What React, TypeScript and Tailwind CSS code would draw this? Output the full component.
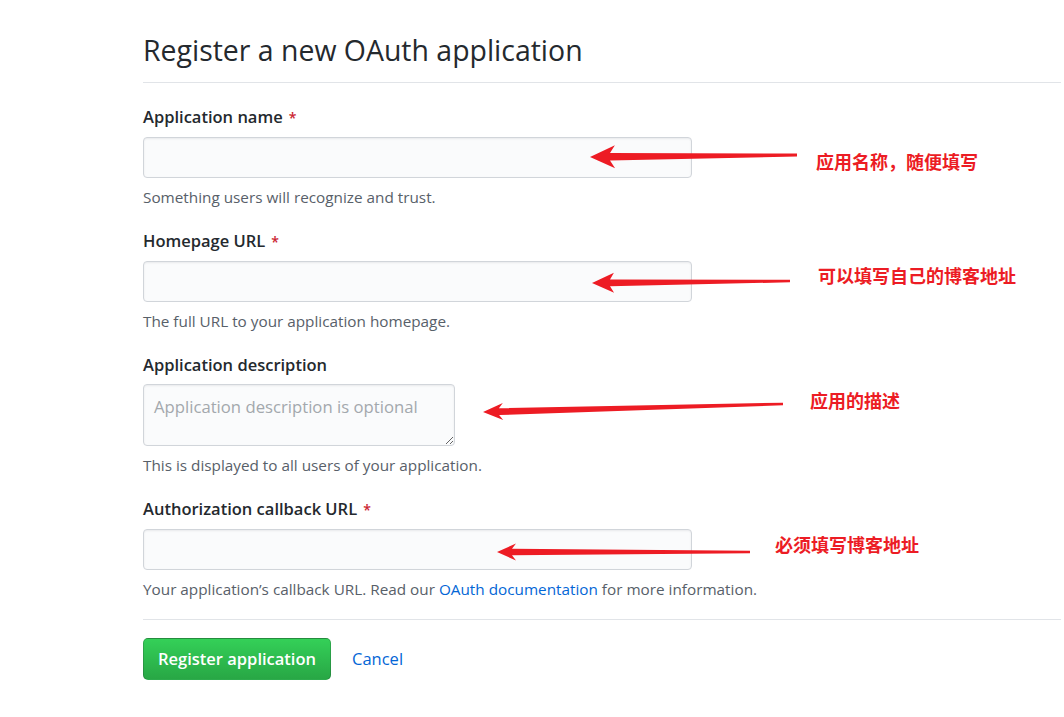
import React from "react";

type Arrow = { tip: [number, number]; tail: [number, number]; hl: number; hh: number; nl: number; sh: number; st: number };

function arrowPoints(a: Arrow): string {
  const [tx, ty] = a.tip;
  const [sx, sy] = a.tail;
  const dx = sx - tx;
  const dy = sy - ty;
  const len = Math.hypot(dx, dy);
  const ux = dx / len;
  const uy = dy / len;
  const nx = -uy;
  const ny = ux;
  const p = (x: number, y: number) => `${x.toFixed(1)},${y.toFixed(1)}`;
  return [
    p(tx, ty),
    p(tx + ux * a.hl + nx * a.hh, ty + uy * a.hl + ny * a.hh),
    p(tx + ux * a.nl + nx * a.sh, ty + uy * a.nl + ny * a.sh),
    p(sx + nx * a.st, sy + ny * a.st),
    p(sx - nx * a.st, sy - ny * a.st),
    p(tx + ux * a.nl - nx * a.sh, ty + uy * a.nl - ny * a.sh),
    p(tx + ux * a.hl - nx * a.hh, ty + uy * a.hl - ny * a.hh),
  ].join(" ");
}

const arrows: Arrow[] = [
  { tip: [590, 157], tail: [797, 155], hl: 25, hh: 11.5, nl: 20, sh: 3.8, st: 1.4 },
  { tip: [592, 283], tail: [790, 281], hl: 22, hh: 10, nl: 18, sh: 3.4, st: 1.3 },
  { tip: [483, 412], tail: [783, 404], hl: 20, hh: 8.5, nl: 16, sh: 3.4, st: 1.3 },
  { tip: [497, 552], tail: [750, 552], hl: 19, hh: 8.5, nl: 15, sh: 3.2, st: 1.3 },
];

const notes = [
  { text: "应用名称，随便填写", cls: "left-[816px] top-[149px]" },
  { text: "可以填写自己的博客地址", cls: "left-[818px] top-[263px]" },
  { text: "应用的描述", cls: "left-[810px] top-[388px]" },
  { text: "必须填写博客地址", cls: "left-[775px] top-[532px]" },
];

const font = { fontFamily: '"Open Sans", "Noto Sans", sans-serif' };

function Label({ children, required }: { children: React.ReactNode; required?: boolean }) {
  return (
    <div className="h-[24px] leading-[24px] text-[16.5px] font-semibold text-[#24292e]">
      {children}
      {required && <span className="ml-[6px] text-[14px] text-[#cb2431]">*</span>}
    </div>
  );
}

function Note({ children }: { children: React.ReactNode }) {
  return <div className="mt-[9px] h-[20px] leading-[20px] text-[15.3px] text-[#586069]">{children}</div>;
}

function Input() {
  return (
    <div className="mt-[8px] h-[41px] w-[549px] rounded-[4px] border border-[#d1d5da] bg-[#fafbfc] shadow-[inset_0_1px_2px_rgba(27,31,35,0.075)]" />
  );
}

export default function App() {
  return (
    <div className="relative h-[717px] w-[1064px] overflow-hidden bg-white" style={font}>
      <div className="ml-[143px] w-[918px]">
        <div className="border-b border-[#e1e4e8] pt-[32px] pb-[14px]">
          <h1 className="h-[36px] text-[28.45px] leading-[36px] font-normal text-[#24292e]">Register a new OAuth application</h1>
        </div>

        <div className="pt-[22px]">
          <Label required>Application name</Label>
          <Input />
          <Note>Something users will recognize and trust.</Note>
        </div>

        <div className="pt-[22px]">
          <Label required>Homepage URL</Label>
          <Input />
          <Note>The full URL to your application homepage.</Note>
        </div>

        <div className="pt-[22px]">
          <Label>Application description</Label>
          <textarea
            placeholder="Application description is optional"
            className="mt-[7px] block h-[62px] w-[312px] rounded-[4px] border border-[#d1d5da] bg-[#fafbfc] px-[10px] pt-[10px] text-[16.7px] leading-[24px] text-[#24292e] placeholder:text-[#a3a8ad] shadow-[inset_0_1px_2px_rgba(27,31,35,0.075)] outline-none"
            style={font}
          />
          <Note>This is displayed to all users of your application.</Note>
        </div>

        <div className="pt-[22px]">
          <Label required>Authorization callback URL</Label>
          <Input />
          <Note>
            Your application’s callback URL. Read our <span className="text-[#0366d6]">OAuth documentation</span> for more information.
          </Note>
        </div>

        <div className="mt-[20px] border-t border-[#e1e4e8] pt-[18px] flex items-center">
          <button
            className="h-[42px] rounded-[5px] border border-[rgba(27,31,35,0.2)] bg-gradient-to-b from-[#34d058] to-[#28a745] px-[14px] pt-[1px] text-[16.5px] font-semibold text-white"
            style={font}
          >
            Register application
          </button>
          <span className="ml-[21px] pt-[1px] text-[16.5px] text-[#0366d6]">Cancel</span>
        </div>
      </div>

      <svg className="pointer-events-none absolute left-0 top-0" width="1064" height="717" viewBox="0 0 1064 717">
        {arrows.map((a, i) => (
          <polygon key={i} points={arrowPoints(a)} fill="#ed1c24" />
        ))}
      </svg>

      {notes.map((n, i) => (
        <div
          key={i}
          className={`absolute ${n.cls} text-[18px] leading-[24px] font-bold text-[#ec1c24] whitespace-nowrap`}
          style={{ fontFamily: '"Noto Sans CJK SC", sans-serif' }}
        >
          {n.text}
        </div>
      ))}
    </div>
  );
}
